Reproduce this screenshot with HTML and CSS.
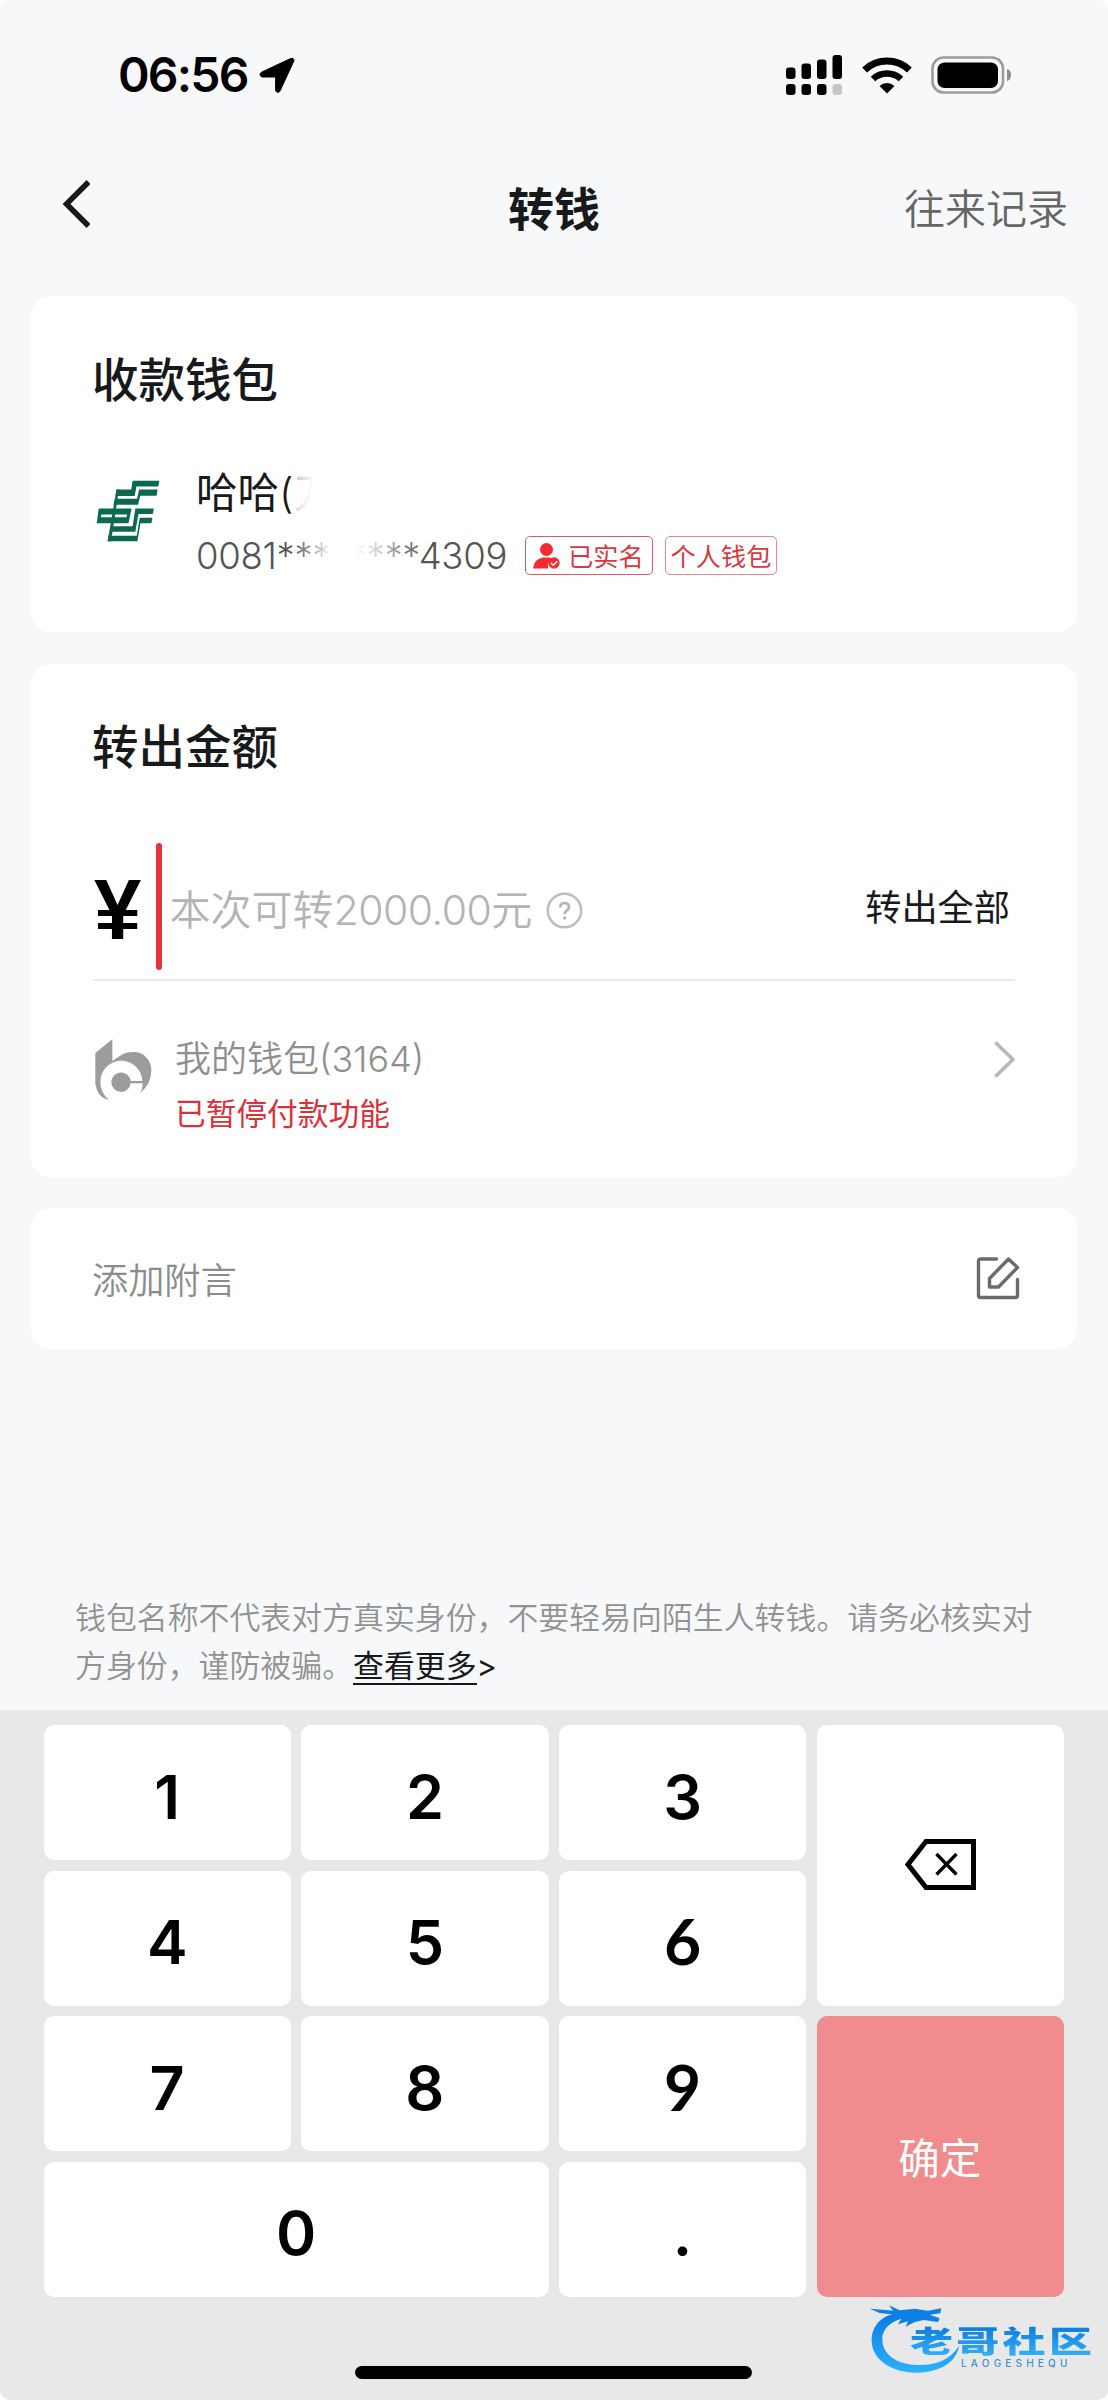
FILE: index.html
```html
<!DOCTYPE html>
<html lang="zh-CN">
<head>
<meta charset="utf-8">
<title>转钱</title>
<link rel="stylesheet" href="styles.css">
</head>
<body>
<div class="screen">
  <header class="status">
    <div class="status-left">
      <span class="clock">06:56</span>
      <svg class="locate" width="36" height="36" viewBox="0 0 36 36"><path d="M2.5 15.2 31.5 1.6Q34.8.5 35 3.6L21 34Q18.5 37 16.6 33.6V20H3.2Q-.8 18.3 2.5 15.2Z" stroke="#000" stroke-width="1"/></svg>
    </div>
    <div class="status-right">
      <svg width="57" height="40" viewBox="0 0 57 40"><g><rect y="12.500" width="9.500" height="11.500" rx="3"/><rect x="15.500" y="8.500" width="9.500" height="15.500" rx="3"/><rect x="31" y="4.500" width="9.500" height="19.500" rx="3"/><rect x="46.500" y="0" width="9.500" height="24" rx="3"/><rect y="29" width="9.500" height="11" rx="3"/><rect x="15.500" y="29" width="9.500" height="11" rx="3"/><rect x="31" y="29" width="9.500" height="11" rx="3"/><rect x="46.500" y="29" width="9.500" height="11" rx="3" fill="#c6c6c8"/></g></svg>
      <svg class="wifi" width="50" height="38" viewBox="0 0 50 38"><path d="M2.600 14a32.500 32.500 0 0 1 44.800 0" fill="none" stroke="#000" stroke-width="7"/><path d="M11 23a20.500 20.500 0 0 1 28 0" fill="none" stroke="#000" stroke-width="6.500"/><path d="M17.500 30a11 11 0 0 1 15 0L25 37.500Z"/></svg>
      <svg width="81" height="38" viewBox="0 0 81 38"><rect x="1.500" y="1.500" width="70.500" height="35" rx="11" fill="none" stroke="#9c9c9e" stroke-width="2.600"/><rect x="6.500" y="6.500" width="60.500" height="25.500" rx="7"/><path d="M76 13q4 1 4 6t-4 6Z" fill="#8c8c8e"/></svg>
    </div>
  </header>

  <nav class="nav">
    <svg class="back" width="28" height="48" viewBox="0 0 28 48"><path d="M26.500 2 4.500 24l22 22" fill="none" stroke="#18191b" stroke-width="5.500"/></svg>
    <h1 class="nav-title">转钱</h1>
    <a class="nav-link">往来记录</a>
  </nav>

  <main class="cards">
    <section class="card payee">
      <h2 class="card-title">收款钱包</h2>
      <div class="payee-row">
        <svg class="bank" width="64" height="62" viewBox="223 601 187 181"><g fill="#0b6a4b"><path d="M330 603H408L405 620H341L336 648H280L283 629H326Z"/><path d="M349 629H403L400 647H352L346 673H274L278 656H343Z"/><path fill-rule="evenodd" d="M231 684H327L318 727H225ZM239 702 237 710H312L314 702Z"/><path d="M338 684H392L389 700H347L338 752H264L268 736H330Z"/><path d="M351 711H388L385 727H353L344 780H257L260 764H342Z"/><path d="M283 629H290L267 780H257Z"/></g></svg>
        <div class="payee-info">
          <div class="payee-name">哈哈<span class="paren">(</span><span class="erased-name">刀</span></div>
          <div class="payee-account">
            <span class="account">0081<span class="stars">********</span>4309</span>
            <span class="tag tag-verified"><svg width="27" height="26" viewBox="0 0 27 26"><circle cx="13.500" cy="6.500" r="6.500" fill="#f42c30"/><path d="M0 25.500Q1 16 10 14.500h6q3 .5 4 1.500-6 2-5 9.500Z" fill="#f42c30"/><circle cx="21" cy="20" r="5.700" fill="#f42c30"/><path d="m18 20 2.300 2.300 4-4" fill="none" stroke="#fff" stroke-width="1.500"/></svg>已实名</span>
            <span class="tag">个人钱包</span>
          </div>
        </div>
      </div>
    </section>

    <section class="card amount">
      <h2 class="card-title">转出金额</h2>
      <div class="amount-row">
        <span class="yen">¥</span>
        <span class="caret"></span>
        <span class="placeholder">本次可转<span class="limit">2000.00</span>元</span>
        <svg class="help" width="37" height="37" viewBox="0 0 37 37"><circle cx="18.500" cy="18.500" r="16.700" fill="none" stroke="#bdbdbd" stroke-width="2.500"/><path d="M14.300 15.500q0-4.500 4.300-4.500t4.300 4q0 2-2.300 3.700-1.900 1.400-1.900 3.600" fill="none" stroke="#b5b5b5" stroke-width="2.700"/><circle cx="18.700" cy="26" r="1.700" fill="#b5b5b5"/></svg>
        <a class="all">转出全部</a>
      </div>
      <div class="wallet">
        <svg class="wallet-logo" width="57" height="62" viewBox="46 56 171 186"><path fill="#9c9c9c" d="M98 57 47 98V190Q52 230 88 240Q62 215 62 187A63 63 0 0 1 188 182H153A29 29 0 1 0 153 189H189Q190 205 182 218Q215 190 215 150A52 55 0 0 0 160 95Q138 95 125 104L98 122Z"/></svg>
        <div class="wallet-info">
          <div class="wallet-name">我的钱包<span class="tail">(3164)</span></div>
          <div class="wallet-warn">已暂停付款功能</div>
        </div>
        <svg class="chev" width="22" height="37" viewBox="0 0 22 37"><path d="m2.500 2.500 16.500 16-16.500 16" fill="none" stroke="#b8b8b8" stroke-width="3.600" stroke-linecap="round" stroke-linejoin="round"/></svg>
      </div>
    </section>

    <section class="card memo">
      <span>添加附言</span>
      <svg width="44" height="44" viewBox="0 0 44 44"><g fill="none" stroke="#6b6b6b" stroke-width="3.400" stroke-linecap="round" stroke-linejoin="round"><path d="M20.500 3H4.500Q2.500 3 2.500 5V39.500Q2.500 41.500 4.500 41.500H39.500Q41.500 41.500 41.500 39.500V23.500"/><path d="M32.500 3 13.500 22.500V31H22.500L41.500 11.500Z"/></g></svg>
    </section>
  </main>

  <p class="notice">钱包名称不代表对方真实身份，不要轻易向陌生人转钱。请务必核实对<br>方身份，谨防被骗。<a class="more"><span class="more-text">查看更多</span>&gt;</a></p>

  <div class="keyboard">
    <div class="keys">
      <button class="key">1</button>
      <button class="key">2</button>
      <button class="key">3</button>
      <button class="key key-delete"><svg width="73" height="54" viewBox="0 0 73 54"><path d="M22 3.500H69.500V49.500H22L4 26.500Z" fill="none" stroke="#000" stroke-width="5"/><path d="m32.500 16 20 20.500m0-20.500-20 20.500" fill="none" stroke="#000" stroke-width="3.300"/></svg></button>
      <button class="key">4</button>
      <button class="key">5</button>
      <button class="key key-alt">6</button>
      <button class="key">7</button>
      <button class="key">8</button>
      <button class="key key-alt">9</button>
      <button class="key key-ok">确定</button>
      <button class="key key-zero">0</button>
      <button class="key">.</button>
    </div>
    <div class="home"></div>
    <div class="watermark">
      <svg class="dragon" width="92" height="70" viewBox="208 164 276 210"><defs><linearGradient id="sea" x1="0" y1="0" x2="0" y2="1"><stop offset="0" stop-color="#0b7be0"/><stop offset="1" stop-color="#2bb2fb"/></linearGradient></defs><g fill="url(#sea)"><path d="M320 188C240 190 215 235 216 275C218 340 290 372 355 370C420 368 470 340 478 290C450 335 400 350 350 347C290 345 248 315 248 270C248 235 280 208 335 203Z"/><path fill="#0c80e4" d="M210 178 250 181 280 184 268 168 300 183 345 178 385 184 425 177 422 192 390 196 420 207 415 218 372 212 345 218 318 232 325 216 295 225 305 208 280 208 290 196 240 191Z"/></g></svg>
      <div class="wm-name">老哥社区</div>
      <div class="wm-latin">LAOGESHEQU</div>
    </div>
  </div>
</div>
</body>
</html>
```
FILE: styles.css
```css
* { box-sizing: border-box; }

body {
  margin: 0;
  background: #fff;
  font-family: Inter, "Noto Sans CJK SC", sans-serif;
  color: #18191b;
}

.screen {
  display: flex;
  flex-direction: column;
  width: 1108px;
  height: 2400px;
  background: #f7f8fa;
  border-radius: 10px;
  overflow: hidden;
}

svg { display: block; flex: none; }
h1, h2, p { margin: 0; }

.status {
  display: flex;
  justify-content: space-between;
  align-items: center;
  height: 150px;
  padding: 0 96px 0 118px;
}
.status-left, .status-right { display: flex; align-items: center; }
.clock {
  width: 141px;
  font-size: 48px;
  font-weight: 600;
  line-height: 60px;
  color: #000;
  letter-spacing: -1.800px;
}
.status-right { gap: 19px; }

.nav {
  display: grid;
  grid-template-columns: 1fr auto 1fr;
  align-items: center;
  height: 114px;
  padding: 4px 40px 0 62px;
  margin-bottom: 32px;
}
.back { margin-top: -10px; }
.nav-title {
  margin-left: -22px;
  font-size: 46px;
  font-weight: 700;
  line-height: 60px;
}
.nav-link {
  justify-self: end;
  font-size: 41px;
  font-weight: 350;
  line-height: 56px;
  color: #666;
}

.cards {
  display: flex;
  flex-direction: column;
  gap: 31.500px;
  padding: 0 31px;
}
.card {
  padding: 0 62px;
  background: #fff;
  border-radius: 20px;
}
.card-title {
  margin-left: -1px;
  font-size: 46.500px;
  font-weight: 500;
  line-height: 60px;
}

.payee { height: 336px; padding-top: 54px; }
.payee-row { display: flex; margin-top: 56px; }
.bank { margin: 14px 36px 0 3px; }
.payee-name { font-size: 41.500px; font-weight: 400; line-height: 54px; }
.paren { font-weight: 300; }
.erased-name {
  color: transparent;
  background: linear-gradient(100deg, #bbb, #fff 45%);
  -webkit-background-clip: text;
  background-clip: text;
}
.payee-account { display: flex; align-items: center; height: 44px; margin-top: 13.500px; }
.account {
  width: 329px;
  font-size: 36.500px;
  font-weight: 300;
  line-height: 44px;
  letter-spacing: -0.300px;
  color: #555;
}
.stars {
  color: transparent;
  background: linear-gradient(90deg, #555 8%, #999 24%, #fff 38%, #fff 55%, #ccc 72%, #777 92%);
  -webkit-background-clip: text;
  background-clip: text;
}
.tag {
  display: flex;
  align-items: center;
  gap: 8px;
  height: 39px;
  margin-right: 12px;
  padding: 0 5px 2px;
  border: 1.500px solid #e8868a;
  border-radius: 5px;
  font-size: 25.200px;
  font-weight: 400;
  color: #d8383e;
  white-space: nowrap;
}
.tag-verified { padding: 0 8px 2px 7px; border-color: #dc5a60; }
.tag-verified svg { margin-top: 2px; }

.amount { height: 513px; padding-top: 53.500px; }
.amount-row {
  display: flex;
  align-items: center;
  height: 138px;
  margin-top: 65.500px;
  padding-bottom: 9px;
  border-bottom: 2px solid #ebebeb;
}
.yen {
  width: 63px;
  margin-top: 8px;
  padding-left: 1px;
  font-family: "Liberation Sans", sans-serif;
  font-size: 85px;
  font-weight: 700;
  line-height: 110px;
  color: #000;
}
.caret { width: 5.500px; height: 127px; border-radius: 3px; background: #e3343b; }
.placeholder {
  margin: 8px 14px 0 8px;
  font-size: 41px;
  font-weight: 350;
  line-height: 60px;
  color: #b3b3b3;
  white-space: nowrap;
}
.limit { font-weight: 300; letter-spacing: -0.500px; }
.help { margin-top: 8px; }
.all { margin: 3px 5px 0 auto; font-size: 36.200px; font-weight: 400; line-height: 50px; }

.wallet { display: flex; padding-top: 55px; }
.wallet-logo { margin: 3px 23px 0 2px; }
.wallet-name { padding-top: 1.500px; font-size: 36px; font-weight: 350; line-height: 44px; color: #8f8f8f; }
.tail { font-weight: 300; }
.wallet-warn { margin-top: 13px; font-size: 30.700px; font-weight: 400; line-height: 40px; color: #dc3038; }
.chev { margin: 5px -1px 0 auto; }

.memo {
  display: flex;
  align-items: center;
  justify-content: space-between;
  height: 140.500px;
  padding: 0 57px 0 61px;
  font-size: 36.200px;
  font-weight: 350;
  color: #8c8c8c;
}

.notice {
  margin: 245.500px 0 19px 75px;
  font-size: 30.900px;
  font-weight: 350;
  line-height: 48.300px;
  color: #929292;
  white-space: nowrap;
}
.more { color: #18191b; font-weight: 400; }
.more-text { border-bottom: 2.500px solid #18191b; display: inline-block; line-height: 34px; }

.keyboard {
  position: relative;
  flex: 1;
  padding: 15.500px 44px 0 43.500px;
  background: #e8e8e8;
}
.keys {
  display: grid;
  grid-template-columns: repeat(4, 1fr);
  grid-template-rows: repeat(4, 135px);
  gap: 10.600px 10.300px;
}
.key {
  display: flex;
  align-items: center;
  justify-content: center;
  padding: 8px 0 0;
  border: 0;
  border-radius: 10px;
  background: #fff;
  font-family: Inter, "Noto Sans CJK SC", sans-serif;
  font-size: 61px;
  font-weight: 600;
  color: #000;
}
.key-alt { padding-top: 5px; font-family: Lato, sans-serif; font-size: 64px; font-weight: 700; }
.key-delete { grid-column: 4; grid-row: 1 / span 2; padding: 0; }
.key-ok {
  grid-column: 4;
  grid-row: 3 / span 2;
  padding: 0 1px 2px 0;
  background: #f08c8e;
  color: #fff;
  font-size: 41.500px;
  font-weight: 400;
}
.key-zero { grid-column: 1 / span 2; }

.home {
  width: 397px;
  height: 13px;
  margin: 69px auto 0;
  border-radius: 7px;
  background: #000;
}

.watermark { position: absolute; left: 869px; top: 594px; width: 225px; height: 72px; }
.dragon { position: absolute; left: 0; top: 0; }
.wm-name {
  position: absolute;
  left: 41px;
  top: 16px;
  font-size: 43px;
  font-weight: 900;
  line-height: 43px;
  letter-spacing: 3.300px;
  white-space: nowrap;
  color: transparent;
  background: linear-gradient(#0c7ce0, #35b0f5);
  -webkit-background-clip: text;
  background-clip: text;
  transform: scaleY(0.700);
  transform-origin: center;
}
.wm-latin {
  position: absolute;
  left: 92px;
  top: 54px;
  font-size: 10px;
  font-weight: 500;
  line-height: 10px;
  letter-spacing: 4.200px;
  color: #3d8fd0;
}
```
